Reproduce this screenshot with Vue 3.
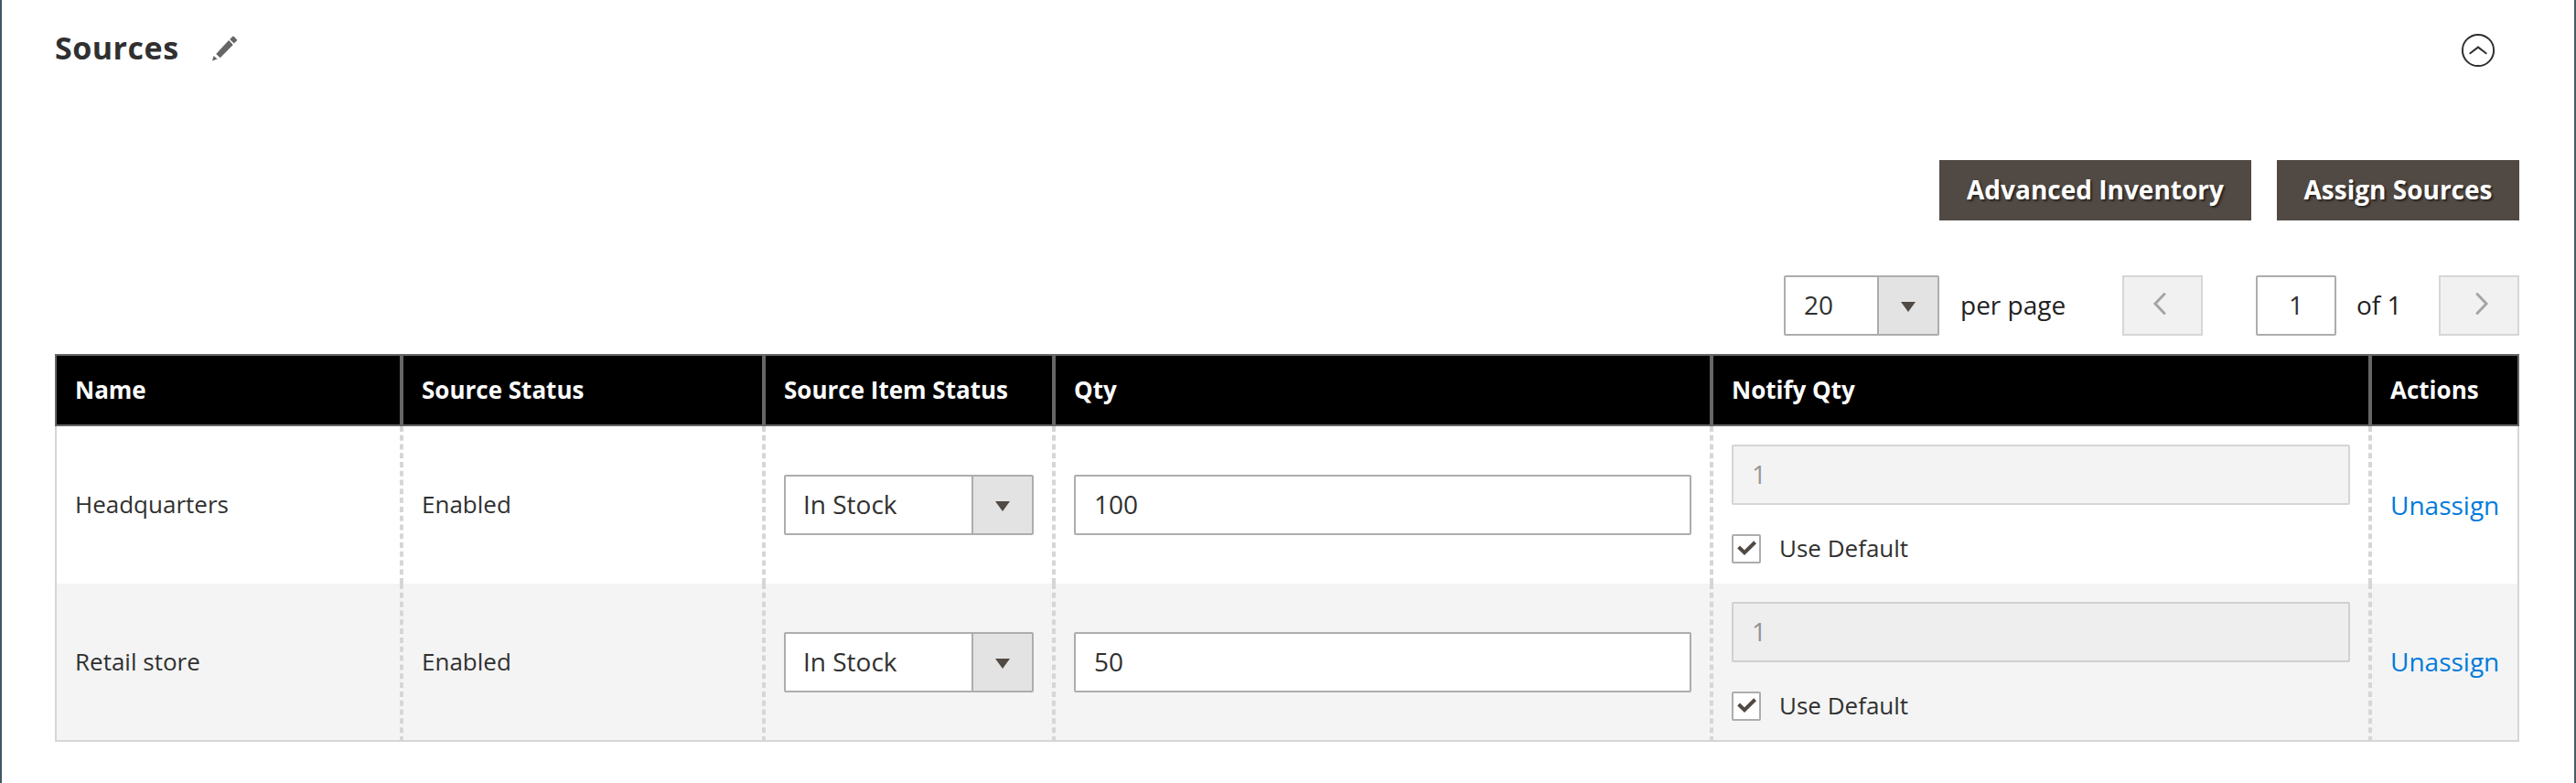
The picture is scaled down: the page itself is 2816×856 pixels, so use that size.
<script setup>
import { ref } from 'vue'

const columns = ['Name', 'Source Status', 'Source Item Status', 'Qty', 'Notify Qty', 'Actions']

const sources = ref([
  { name: 'Headquarters', status: 'Enabled', itemStatus: 'In Stock', qty: '100', notify: '1' },
  { name: 'Retail store', status: 'Enabled', itemStatus: 'In Stock', qty: '50', notify: '1' },
])
</script>

<template>
  <main class="panel">
    <header class="panel-head">
      <h2 class="title">Sources</h2>
      <svg class="pencil" width="28" height="28" viewBox="0 0 28 28">
        <path d="M4.2 19.9 17.6 5.6a.8.8 0 0 1 1.1 0l3.6 3.8a.8.8 0 0 1 0 1.1L8.7 24.3z" />
        <path d="M19.2 3.9 22.1 1a1.2 1.2 0 0 1 1.7 0l2.9 3a1.2 1.2 0 0 1 0 1.7L23.7 8.5z" />
        <path d="M1.6 21.9 5.6 25.4 0 27.6z" />
      </svg>
      <svg class="collapse" width="38" height="38" viewBox="0 0 38 38">
        <circle cx="19" cy="19" r="17.1" />
        <path d="M10.3 22.3 19 15.6l8.7 6.7" />
      </svg>
    </header>

    <div class="actions">
      <button class="btn advanced">Advanced Inventory</button>
      <button class="btn assign">Assign Sources</button>
    </div>

    <div class="pager">
      <div class="select size">
        <span class="value">20</span>
        <span class="drop"><svg width="16" height="11" viewBox="0 0 16 11"><path d="M0 0h16L8 11z" /></svg></span>
      </div>
      <span class="per-page">per page</span>
      <button class="nav prev">
        <svg width="18" height="28" viewBox="0 0 18 28"><path d="M14 3.5 4 14l10 10.5" /></svg>
      </button>
      <div class="field page">1</div>
      <span class="of">of 1</span>
      <button class="nav next">
        <svg width="18" height="28" viewBox="0 0 18 28"><path d="M4 3.5 14 14 4 24.5" /></svg>
      </button>
    </div>

    <table class="grid">
      <colgroup>
        <col class="c-name" />
        <col class="c-status" />
        <col class="c-item" />
        <col class="c-qty" />
        <col class="c-notify" />
        <col class="c-actions" />
      </colgroup>
      <thead>
        <tr>
          <th v-for="column in columns" :key="column">{{ column }}</th>
        </tr>
      </thead>
      <tbody>
        <tr v-for="source in sources" :key="source.name">
          <td><div class="text">{{ source.name }}</div></td>
          <td><div class="text">{{ source.status }}</div></td>
          <td>
            <div class="select">
              <span class="value">{{ source.itemStatus }}</span>
              <span class="drop"><svg width="16" height="11" viewBox="0 0 16 11"><path d="M0 0h16L8 11z" /></svg></span>
            </div>
          </td>
          <td><div class="field">{{ source.qty }}</div></td>
          <td>
            <div class="field disabled">{{ source.notify }}</div>
            <label class="default">
              <span class="check">
                <svg width="22" height="20" viewBox="0 0 22 20"><path d="M2.6 8 9 14.2 20.6 2.8" /></svg>
              </span>
              <span class="text">Use Default</span>
            </label>
          </td>
          <td><a class="link">Unassign</a></td>
        </tr>
      </tbody>
    </table>
  </main>
</template>

<style>
body {
  background: #fff;
}
</style>

<style scoped>
.panel {
  box-sizing: border-box;
  width: 2816px;
  height: 856px;
  padding: 0 60px 0 58px;
  border-left: 2px solid #405766;
  border-right: 2px solid #465c67;
  background: #fff;
  color: #303030;
  font-family: "Open Sans", sans-serif;
  font-size: 28px;
  line-height: 38px;
  overflow: hidden;
}

.panel * {
  box-sizing: border-box;
}

.panel-head {
  display: flex;
  align-items: flex-start;
  height: 175px;
}

.title {
  width: 172px;
  margin: 28px 0 0;
  font-size: 34px;
  font-weight: 700;
  letter-spacing: 0.5px;
  line-height: 48px;
}

.pencil {
  margin-top: 39px;
  fill: #666;
}

.collapse {
  margin: 36px 26px 0 auto;
  fill: none;
  stroke: #303030;
  stroke-width: 2;
  stroke-linecap: round;
}

.actions {
  display: flex;
  justify-content: flex-end;
  gap: 28px;
}

.btn {
  height: 66px;
  padding: 0 0 2px;
  border: 0;
  background: #514943;
  color: #fff;
  font: 700 28px/38px "Open Sans", sans-serif;
  text-shadow: 2px 2px 2px rgba(0, 0, 0, 0.5);
  white-space: nowrap;
}

.advanced {
  width: 341px;
}

.assign {
  width: 265px;
}

.pager {
  display: flex;
  justify-content: flex-end;
  align-items: center;
  margin: 60px 0 20px;
  height: 66px;
}

.select {
  display: flex;
  height: 66px;
  border: 2px solid #adadad;
  border-radius: 2px;
  background: #fff;
  font-size: 28px;
}

.select .value {
  flex: 1;
  padding-left: 19px;
  line-height: 60px;
}

.drop {
  display: flex;
  align-items: center;
  justify-content: center;
  width: 66px;
  padding-top: 3px;
  border-left: 2px solid #adadad;
  background: #e3e3e3;
}

.drop svg {
  display: block;
  fill: #514943;
}

.size {
  width: 170px;
}

.size .value {
  padding-left: 20px;
}

.per-page {
  margin-left: 23px;
  width: 177px;
  padding-bottom: 2px;
}

.nav {
  display: flex;
  align-items: center;
  justify-content: center;
  width: 88px;
  height: 66px;
  padding: 0 0 5px;
  border: 2px solid #d6d6d6;
  background: #f1f1f1;
}

.prev {
  padding-right: 6px;
}

.next {
  padding-left: 6px;
}

.nav svg {
  fill: none;
  stroke: #a8a4a1;
  stroke-width: 3;
  stroke-linecap: round;
}

.field {
  height: 66px;
  padding-left: 20px;
  border: 2px solid #adadad;
  border-radius: 2px;
  background: #fff;
  font-size: 28px;
  line-height: 60px;
}

.page {
  width: 88px;
  margin-left: 58px;
  padding: 0;
  text-align: center;
}

.of {
  width: 90px;
  margin-left: 22px;
  padding-bottom: 2px;
}

.per-page,
.of {
  color: #222;
}

.grid {
  width: 2694px;
  table-layout: fixed;
  border-collapse: separate;
  border-spacing: 0;
  font-size: 26px;
}

.c-name { width: 379px; }
.c-status { width: 396px; }
.c-item { width: 317px; }
.c-qty { width: 719px; }
.c-notify { width: 720px; }
.c-actions { width: 163px; }

th {
  height: 79px;
  padding: 0 20px 1px;
  border: 2px solid #666;
  background: #000;
  color: #fff;
  font-weight: 700;
  line-height: 36px;
  text-align: left;
  white-space: nowrap;
}

td {
  height: 172px;
  padding: 0 20px;
  border-left: 2px dashed #d6d6d6;
  border-right: 2px dashed #d6d6d6;
  line-height: 36px;
  vertical-align: middle;
}

td:first-child {
  border-left-style: solid;
}

td:last-child {
  border-right-style: solid;
}

tr:last-child td {
  height: 173px;
  border-bottom: 2px solid #d6d6d6;
}

tbody tr:nth-child(even) td {
  background: #f4f4f4;
}

.text {
  padding-bottom: 2px;
}

.disabled {
  background: #e9e9e9;
  opacity: 0.5;
}

.default {
  display: flex;
  align-items: center;
  height: 32px;
  margin: 32px 0 2px;
}

.check {
  display: flex;
  align-items: center;
  justify-content: center;
  width: 32px;
  height: 32px;
  margin-right: 20px;
  border: 2px solid #adadad;
  border-radius: 2px;
  background: #fff;
}

.check svg {
  fill: none;
  stroke: #514943;
  stroke-width: 4;
}

.link {
  color: #007bdb;
  font-size: 28px;
}
</style>
